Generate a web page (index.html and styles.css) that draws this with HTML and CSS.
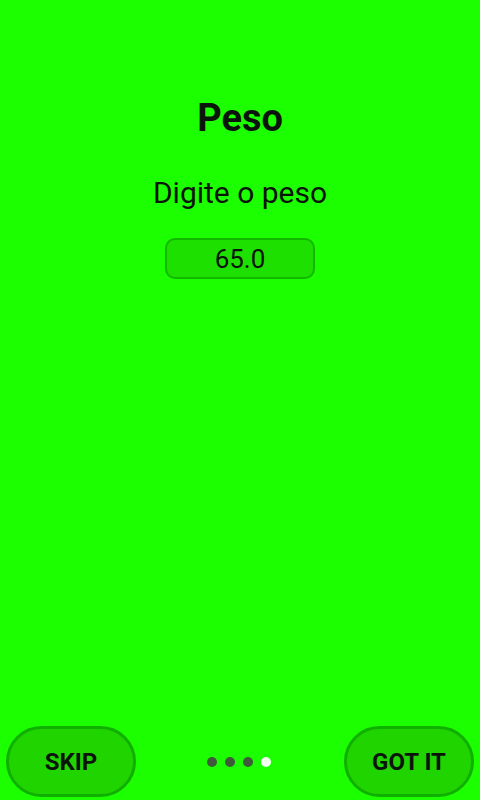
FILE: index.html
```html
<!DOCTYPE html>
<html lang="pt">
<head>
    <meta charset="UTF-8">
    <meta name="viewport" content="width=device-width, initial-scale=1.0">
    <title>Peso</title>
    <link rel="stylesheet" href="styles.css">
</head>
<body>
    <div class="screen">
        <div class="slide">
            <h1 class="title">Peso</h1>
            <p class="desc">Digite o peso</p>
            <input class="field" type="text" value="65.0">
        </div>
        <div class="nav">
            <button class="btn">SKIP</button>
            <div class="dots">
                <span class="dot"></span>
                <span class="dot"></span>
                <span class="dot"></span>
                <span class="dot active"></span>
            </div>
            <button class="btn">GOT IT</button>
        </div>
    </div>
</body>
</html>
```

FILE: styles.css
```css
body {
    margin: 0;
    padding: 0;
    background-color: #1cff00;
    font-family: Roboto, "Liberation Sans", sans-serif;
    color: #0a140a;
}

.screen {
    height: 800px;
    display: flex;
    flex-direction: column;
}

.slide {
    flex: 1;
    display: flex;
    flex-direction: column;
    align-items: center;
    padding-top: 96px;
}

.title {
    margin: 0;
    font-size: 38px;
    font-weight: 700;
    line-height: 44px;
}

.desc {
    margin: 36px 0 0;
    font-size: 30px;
    line-height: 34px;
}

.field {
    margin-top: 28px;
    width: 150px;
    height: 41px;
    box-sizing: border-box;
    border: 2px solid #12b800;
    border-radius: 10px;
    background-color: #1ee000;
    font-family: inherit;
    font-size: 26px;
    color: #0a140a;
    text-align: center;
    padding: 0;
}

.nav {
    display: flex;
    align-items: center;
    justify-content: space-between;
    padding: 0 6px 3px;
}

.btn {
    width: 130px;
    height: 71px;
    border: 3px solid #10b000;
    border-radius: 36px;
    background-color: #20d400;
    font-family: inherit;
    font-size: 24px;
    font-weight: 700;
    color: #0a140a;
    padding: 0;
}

.dots {
    display: flex;
    gap: 8px;
    margin-right: 2px;
}

.dot {
    width: 10px;
    height: 10px;
    border-radius: 50%;
    background-color: #3e5a3a;
}

.dot.active {
    background-color: #f0fff0;
}
```
